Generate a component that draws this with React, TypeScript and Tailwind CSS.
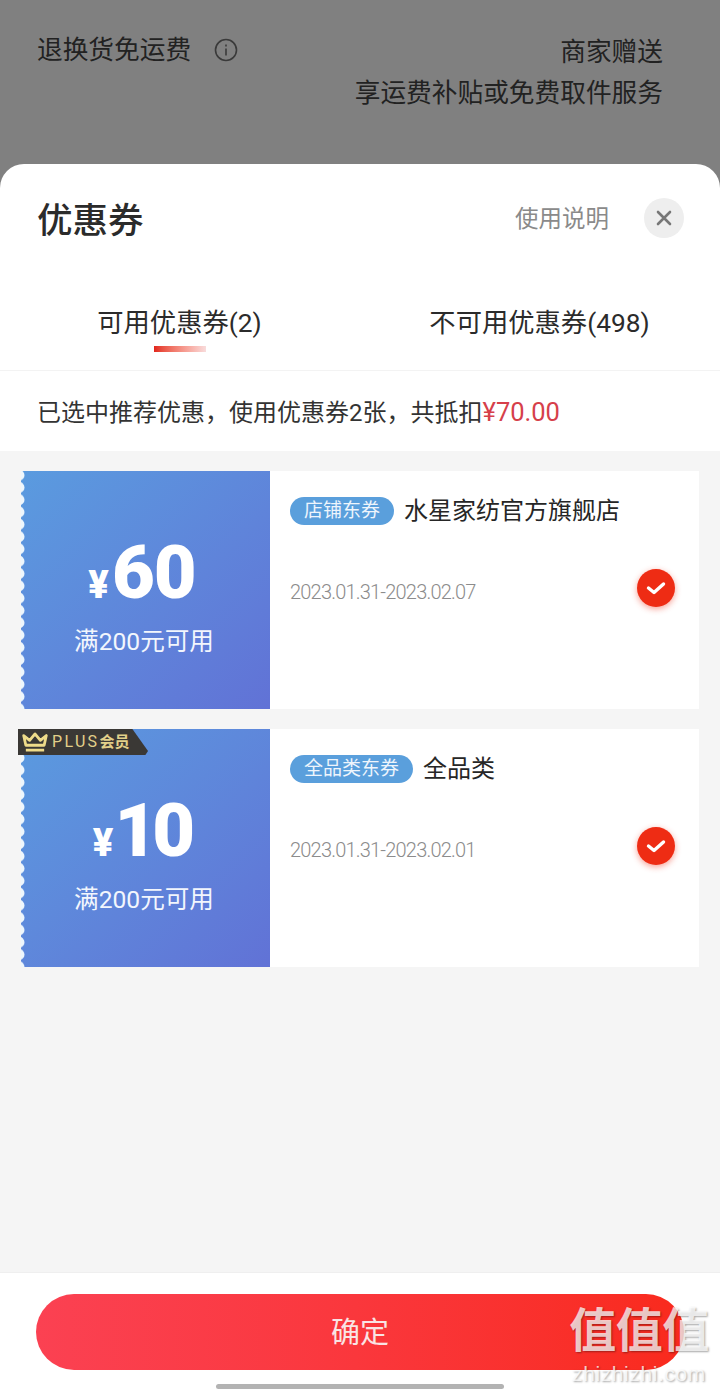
const cjk = "font-['Roboto','Noto_Sans_CJK_SC',sans-serif]";

const coupons = [
  { amount: "60", tag: "店铺东券", name: "水星家纺官方旗舰店", date: "2023.01.31-2023.02.07", yen: "mr-[3px]", shift: "pr-[7px]", digits: "tracking-[-1px]" },
  { amount: "10", tag: "全品类东券", name: "全品类", date: "2023.01.31-2023.02.01", yen: "mr-[1px]", shift: "pr-[8px]", digits: "tracking-[-5px]" },
];

const Scallop = ({ id }: { id: string }) => (
  <svg className="absolute left-0 top-0 h-full w-[4px]" xmlns="http://www.w3.org/2000/svg">
    <defs>
      <pattern id={id} width="4" height="12.3" patternUnits="userSpaceOnUse" y="-2">
        <circle cx="-2" cy="6.15" r="5.5" fill="#eef7fd" />
      </pattern>
    </defs>
    <rect width="4" height="100%" fill={`url(#${id})`} />
  </svg>
);

const Crown = () => (
  <svg width="28" height="22" viewBox="0 0 26 20" fill="none" stroke="#efdc8a" strokeWidth="2.6" strokeLinejoin="round">
    <path d="M2.5 4 L8 8.5 L13 2.5 L18 8.5 L23.5 4 L21.5 13 H4.5 Z" />
    <path d="M4.5 17.5 H21.5" />
  </svg>
);

const Check = () => (
  <div className="flex h-[38px] w-[38px] items-center justify-center rounded-full bg-[#ee2c14] shadow-[0_2px_6px_rgba(238,44,20,0.45)]">
    <svg width="22" height="16" viewBox="0 0 22 16" fill="none" stroke="#ffffff" strokeWidth="3.4" strokeLinecap="round" strokeLinejoin="round">
      <path d="M3.5 8 L9 12.5 L18.5 4" />
    </svg>
  </div>
);

const CouponCard = ({ coupon, index }: { coupon: (typeof coupons)[number]; index: number }) => (
  <div className="flex h-[238px] bg-white">
    <div className="relative flex w-[249px] shrink-0 flex-col items-center bg-gradient-to-br from-[#5a9bdf] to-[#6172d6] pt-[62px]">
      <Scallop id={`scallop-${index}`} />
      <div className={`flex h-[80px] items-baseline text-white ${coupon.shift}`}>
        <span className={`${coupon.yen} font-['Roboto',sans-serif] text-[38px] font-black leading-none`}>¥</span>
        <span className={`${coupon.digits} font-['Roboto',sans-serif] text-[74px] font-black leading-[80px]`}>{coupon.amount}</span>
      </div>
      <div className={`${cjk} mt-[14px] pr-[3px] text-[24.6px] leading-[30px] text-[#f2f6fd]`}>满200元可用</div>
    </div>
    <div className="flex min-w-0 flex-1 flex-col pl-[20px] pr-[24px] pt-[25px]">
      <div className="flex items-center gap-[10px]">
        <span className={`${cjk} flex h-[28px] items-center rounded-full bg-[#5a9fdc] px-[14px] text-[19px] text-[#eef5fc]`}>{coupon.tag}</span>
        <span className={`${cjk} text-[24px] leading-[30px] text-[#262626]`}>{coupon.name}</span>
      </div>
      <div className="mt-[43px] flex items-start justify-between">
        <span className="mt-[9px] font-['Roboto',sans-serif] text-[20px] font-light leading-[28px] tracking-[-0.8px] text-[#8c8c8c]">{coupon.date}</span>
        <Check />
      </div>
    </div>
  </div>
);

export default function App() {
  return (
    <div className={`${cjk} relative flex h-[1392px] w-[720px] flex-col overflow-hidden bg-[#808080]`}>
      {/* dimmed page behind the sheet */}
      <div className="h-[164px] shrink-0 overflow-hidden px-[37px] pt-[32px] text-[25.7px] leading-[41px] text-[#222222]">
        <div className="flex justify-between">
          <div className="flex items-start">
            <span className="leading-[36px]">退换货免运费</span>
            <svg className="ml-[23px] mt-[6px]" width="24" height="24" viewBox="0 0 24 24" fill="none" stroke="#3a3a3a" strokeWidth="1.6">
              <circle cx="12" cy="12" r="10.5" />
              <path d="M12 10.5 V17.5 M12 6.5 V8.5" />
            </svg>
          </div>
          <div className="mr-[20px] text-right">
            <div>商家赠送</div>
            <div>享运费补贴或免费取件服务</div>
          </div>
        </div>
      </div>

      {/* coupon sheet */}
      <div className="flex min-h-0 flex-1 flex-col rounded-t-[24px] bg-white">
        <div className="flex h-[114px] shrink-0 items-start justify-between pl-[37px] pr-[36px] pt-[34px]">
          <span className="mt-[1px] text-[35.5px] font-medium leading-[44px] text-[#2b2b2b]">优惠券</span>
          <div className="flex items-start">
            <span className="mt-[1px] text-[23.5px] leading-[40px] text-[#8a8a8a]">使用说明</span>
            <div className="ml-[35px] flex h-[40px] w-[40px] items-center justify-center rounded-full bg-[#eeeeee]">
              <svg width="18" height="18" viewBox="0 0 18 18" fill="none" stroke="#777777" strokeWidth="2.6" strokeLinecap="round">
                <path d="M3 3 L15 15 M15 3 L3 15" />
              </svg>
            </div>
          </div>
        </div>

        <div className="flex h-[93px] shrink-0 border-b border-[#f3f3f3] text-[26.3px] leading-[34px] text-[#2b2b2b]">
          <div className="flex w-[359px] flex-col items-center pt-[28px]">
            <span>可用优惠券(2)</span>
            <div className="mt-[6px] h-[6px] w-[52px] bg-gradient-to-r from-[#e2231a] to-[#f8dcdc]" />
          </div>
          <div className="flex flex-1 justify-center pt-[28px]">
            <span>不可用优惠券(498)</span>
          </div>
        </div>

        <div className="flex h-[80px] shrink-0 items-center pl-[37px] pt-[3px] text-[24px] text-[#333333]">
          <span>已选中推荐优惠，使用优惠券2张，共抵扣</span>
          <span className="text-[25.5px] text-[#d6404a]">¥70.00</span>
        </div>

        <div className="relative flex flex-1 flex-col gap-[20px] bg-[#f5f5f5] px-[21px] pt-[20px]">
          {coupons.map((coupon, i) => (
            <CouponCard key={coupon.amount} coupon={coupon} index={i} />
          ))}
          {/* PLUS ribbon */}
          <div className="absolute left-[18px] top-[278px] flex h-[26px] w-[130px] items-center gap-[3px] bg-[#3a3835] pl-[3px] [clip-path:polygon(0_0,88%_0,100%_85%,98%_100%,0_100%)]">
            <Crown />
            <span className="flex items-center leading-none text-[#e2d08a]">
              <span className="text-[16px] tracking-[2.3px]">PLUS</span>
              <span className="text-[15px] font-bold">会员</span>
            </span>
          </div>
        </div>

        <div className="flex h-[120px] shrink-0 flex-col items-center border-t border-[#efefef] bg-white px-[36px] pt-[21px]">
          <button className="flex h-[76px] w-full items-center justify-center rounded-full bg-gradient-to-r from-[#fb4152] to-[#f92a1c] pt-[4px] text-[29px] text-[#f9e4e4]">
            确定
          </button>
          <div className="mt-[14px] h-[5px] w-[288px] rounded-full bg-[#b3b3b3]" />
        </div>
      </div>

      {/* site watermark */}
      <div className="pointer-events-none absolute left-[566px] top-[1306px] flex w-[146px] flex-col items-center text-white/75 [text-shadow:1px_1px_2px_rgba(0,0,0,0.35)]">
        <div className="text-[47px] font-bold leading-[50px] tracking-[-0.5px] whitespace-nowrap">值值值</div>
        <div className="mt-[6px] font-['Liberation_Sans',sans-serif] text-[21px] leading-[24px] tracking-[0.6px]">zhizhizhi.com</div>
      </div>
    </div>
  );
}
